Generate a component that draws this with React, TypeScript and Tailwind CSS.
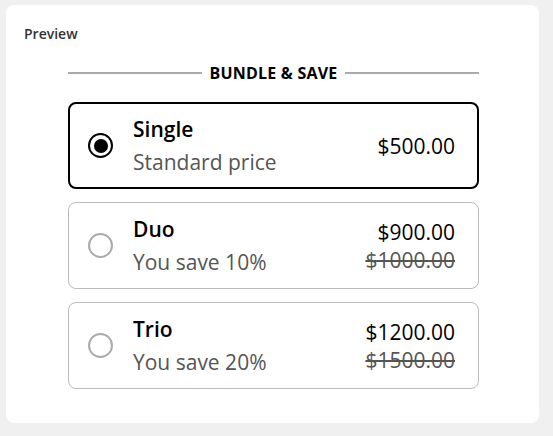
import { useState } from 'react';

type Option = {
  id: string;
  title: string;
  subtitle: string;
  price: string;
  compareAt?: string;
};

const options: Option[] = [
  { id: 'single', title: 'Single', subtitle: 'Standard price', price: '$500.00' },
  { id: 'duo', title: 'Duo', subtitle: 'You save 10%', price: '$900.00', compareAt: '$1000.00' },
  { id: 'trio', title: 'Trio', subtitle: 'You save 20%', price: '$1200.00', compareAt: '$1500.00' },
];

const App = () => {
  const [selected, setSelected] = useState('single');

  return (
    <div className="min-h-screen bg-[#f0f0f0] pt-[5px] pl-[6px] pr-[14px] font-['Open_Sans',sans-serif]">
      <div className="bg-white rounded-lg h-[418px] px-[18px] pt-[19px]">
        <p className="text-[14px] font-semibold text-[#333] leading-5">Preview</p>

        <div className="ml-[44px] mr-[42px] mt-[19px] flex flex-col gap-[13px]">
          {/* heading divider */}
          <div className="flex items-center gap-2 mb-[6px]">
            <div className="flex-1 h-[2px] bg-[#aaa]" />
            <span className="text-[16px] font-bold text-black leading-5 tracking-[0.2px]">BUNDLE &amp; SAVE</span>
            <div className="flex-1 h-[2px] bg-[#aaa]" />
          </div>

          {options.map((o) => {
            const active = selected === o.id;
            return (
              <button
                key={o.id}
                onClick={() => setSelected(o.id)}
                className={`flex items-center h-[87px] rounded-lg text-left ${
                  active ? 'border-2 border-black pl-[18px] pr-[22px]' : 'border border-[#bbb] pl-[19px] pr-[23px]'
                }`}
              >
                {active ? (
                  <span className="w-[25px] h-[25px] rounded-full border-[2.5px] border-black flex items-center justify-center shrink-0">
                    <span className="w-[14px] h-[14px] rounded-full bg-black" />
                  </span>
                ) : (
                  <span className="w-[25px] h-[25px] rounded-full border-2 border-[#aaa] shrink-0" />
                )}
                <div className="ml-5 flex-1 flex flex-col gap-[3px]">
                  <span className="text-[21px] font-semibold text-black leading-[30px]">{o.title}</span>
                  <span className="text-[21px] text-[#555] leading-[30px]">{o.subtitle}</span>
                </div>
                <div className="flex flex-col items-end">
                  <span className="text-[21px] font-medium text-black leading-7">{o.price}</span>
                  {o.compareAt && (
                    <span className="text-[21px] text-[#555] line-through leading-7">{o.compareAt}</span>
                  )}
                </div>
              </button>
            );
          })}
        </div>
      </div>
    </div>
  );
};

export default App;
